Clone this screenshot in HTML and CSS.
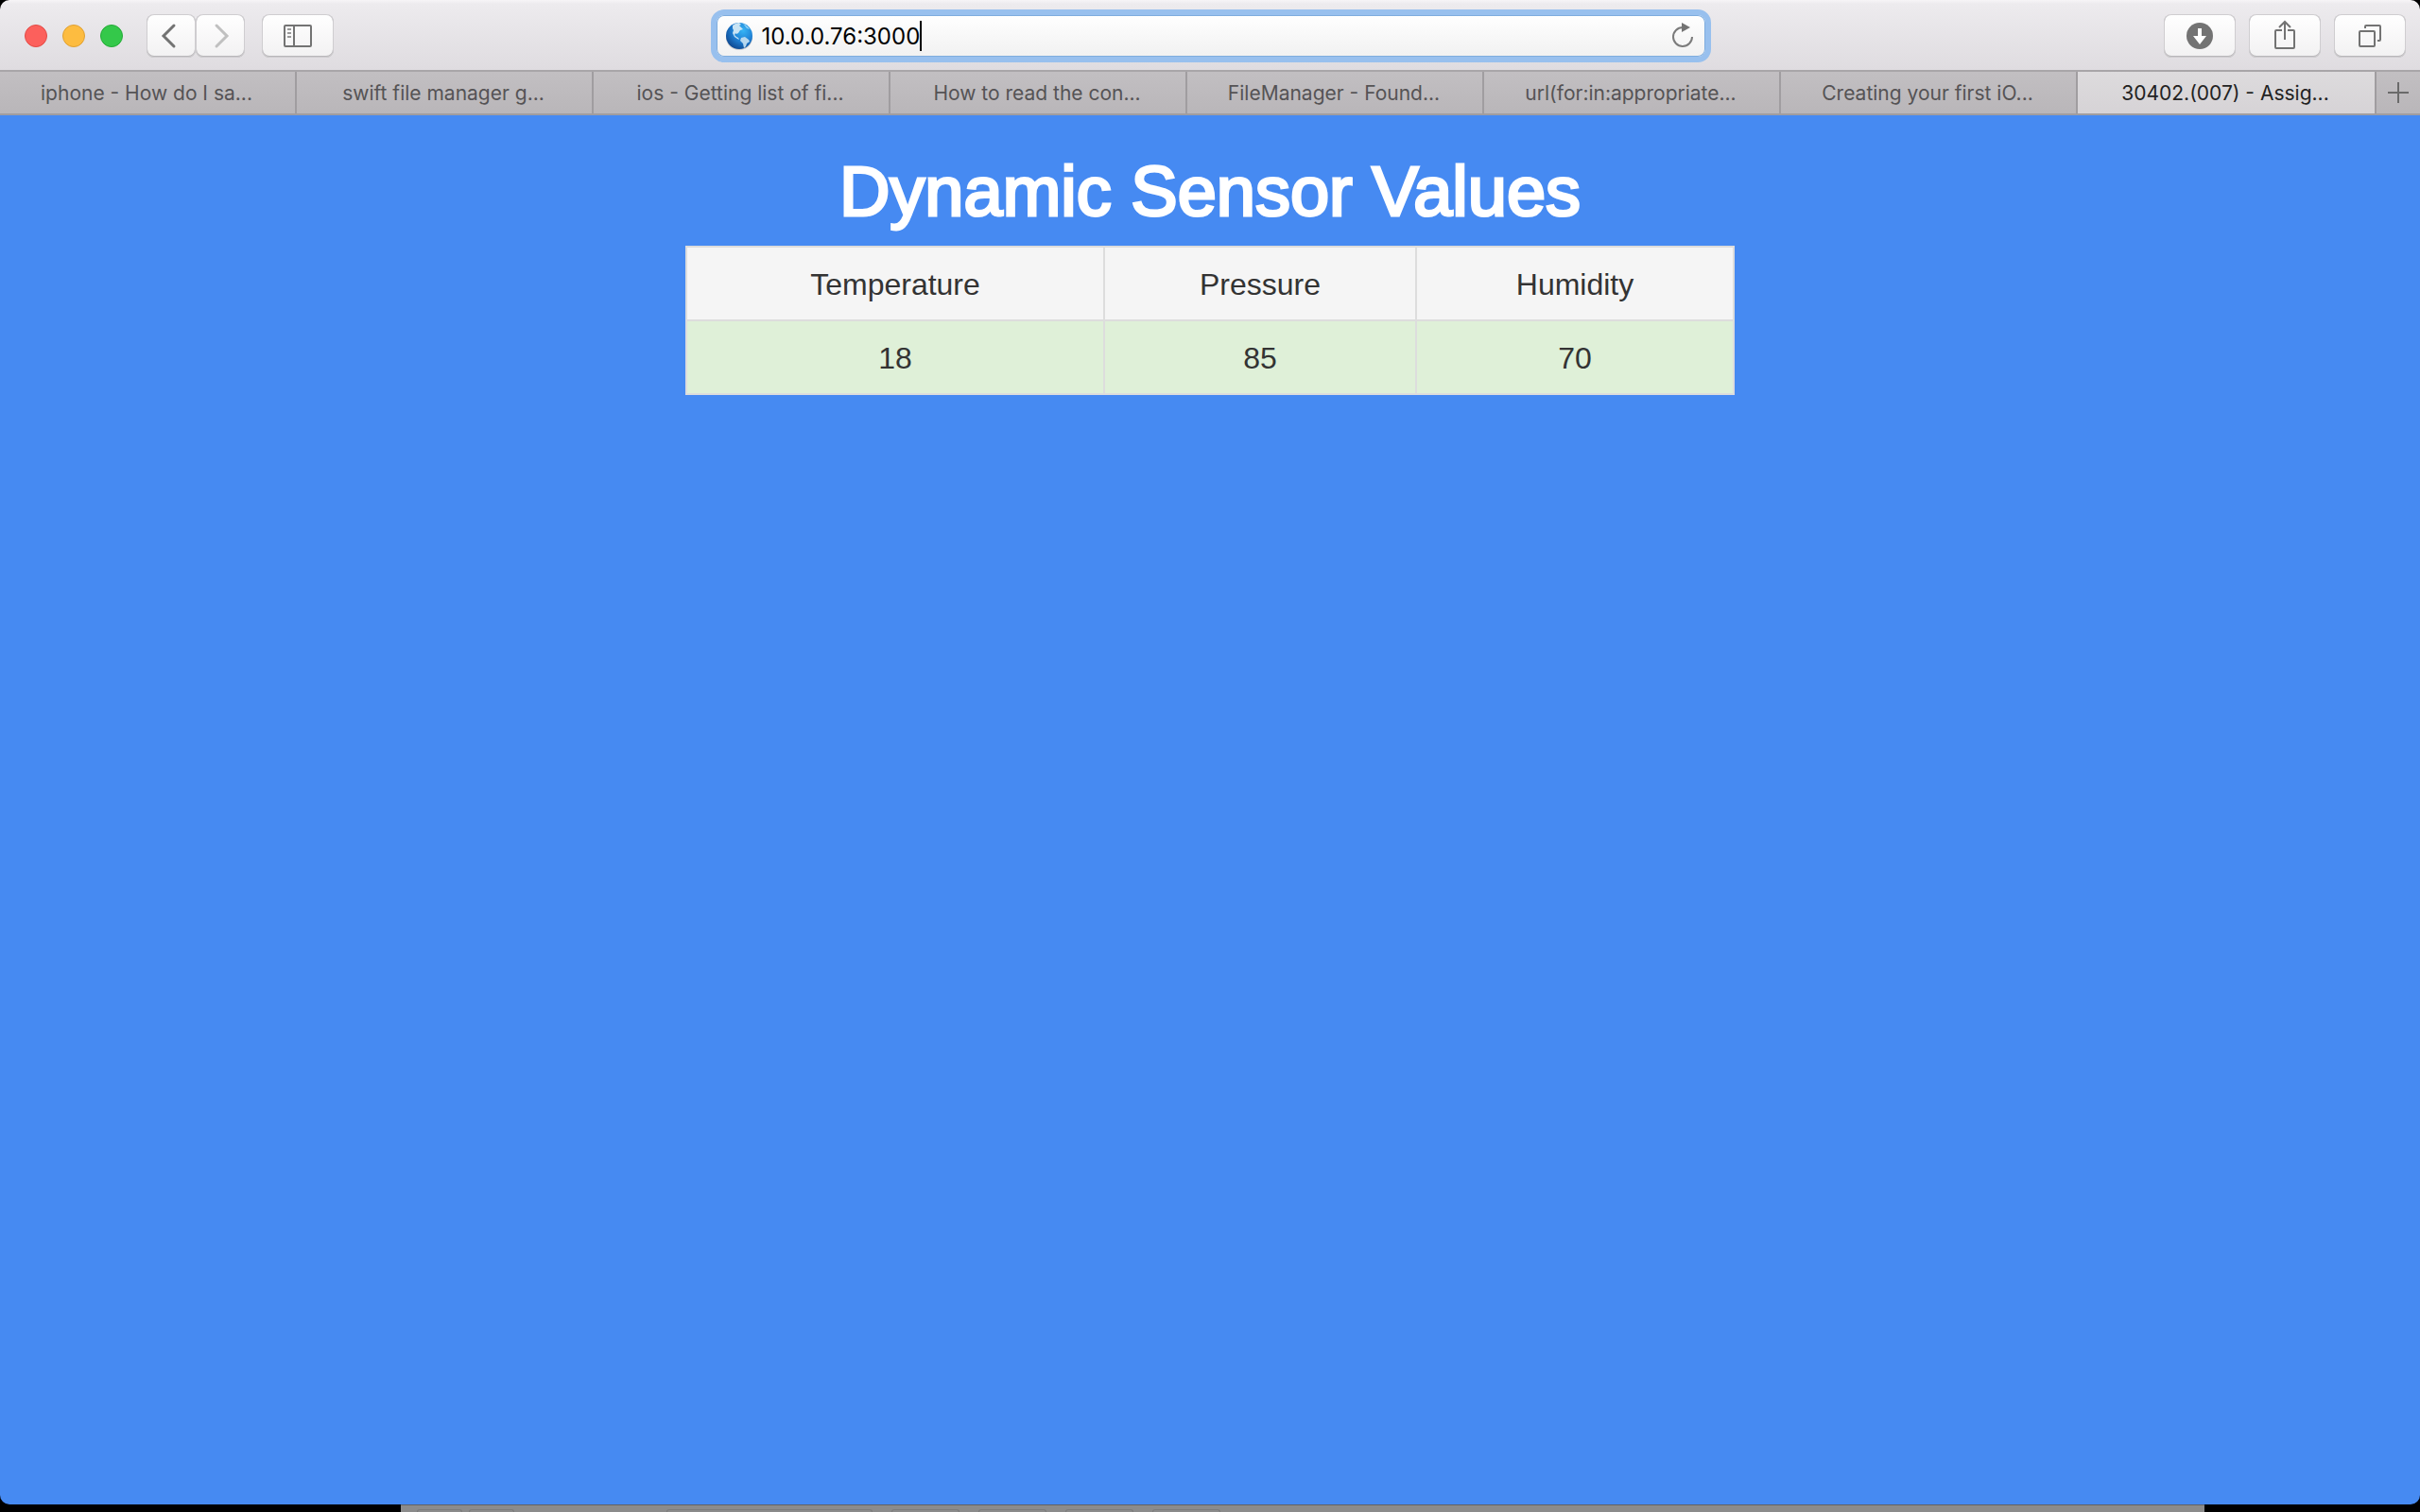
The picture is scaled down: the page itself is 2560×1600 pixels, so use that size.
FILE: index.html
```html
<!DOCTYPE html>
<html lang="en">
<head>
<meta charset="utf-8">
<title>Dynamic Sensor Values</title>
<link rel="stylesheet" href="styles.css">
</head>
<body>
<div class="window">
  <header class="toolbar">
    <div class="side">
      <div class="lights">
        <button class="light red" aria-label="Close"></button>
        <button class="light yellow" aria-label="Minimize"></button>
        <button class="light green" aria-label="Full screen"></button>
      </div>
      <div class="nav">
        <button class="tool narrow" aria-label="Back"><svg width="52" height="46" viewBox="0 0 52 46"><path d="M29 12 18 23l11 11" fill="none" stroke="#737373" stroke-width="3" stroke-linecap="round"/></svg></button>
        <button class="tool narrow" aria-label="Forward" disabled><svg width="52" height="46" viewBox="0 0 52 46"><path d="M22 12l11 11-11 11" fill="none" stroke="#c0c0c0" stroke-width="3" stroke-linecap="round"/></svg></button>
      </div>
      <button class="tool" aria-label="Sidebar"><svg width="76" height="46" viewBox="0 0 76 46" fill="none" stroke="#737373" stroke-width="2"><rect x="24" y="12" width="28" height="22" rx="1"/><path d="M34 12v22"/><path d="M27 16h4M27 20h4M27 24h4" stroke="#999"/></svg></button>
    </div>
    <div class="address">
      <svg class="globe" width="32" height="32" viewBox="0 0 32 32" aria-hidden="true">
        <defs><radialGradient id="sea" cx=".65" cy=".3" r=".8"><stop offset="0" stop-color="#36b4f5"/><stop offset=".5" stop-color="#1f80d4"/><stop offset="1" stop-color="#0c4188"/></radialGradient></defs>
        <ellipse cx="16" cy="18" rx="14" ry="13" fill="#000" opacity=".15"/>
        <circle cx="16" cy="16" r="14" fill="url(#sea)"/>
        <path d="M9 5c2-2 5-3 7-3l2 2-2 1 2 2 2 2-3 1-2 3-2 1-1-1-1 2 2 2 2 1 1 2-2-1-3-2-2-4 1-3-1-2z" fill="#c9e4f4"/>
        <path d="M18 18l4-1 4 3 1 2-3 2-1 3-2 2-1-5-3-3z" fill="#b7d8ef"/>
        <path d="M20 3c3 1 6 4 7 6l-3-1z" fill="#8bd0f6"/>
      </svg>
      <input class="url" type="text" value="10.0.0.76:3000" aria-label="Address">
      <span class="caret"></span>
      <button class="reload" aria-label="Reload"><svg width="26" height="32" viewBox="0 0 26 32"><path d="M23 17a10 10 0 1 1-10-10" fill="none" stroke="#7b7b7b" stroke-width="2"/><path d="M12 2l9 5-9 5z" fill="#737373"/></svg></button>
    </div>
    <div class="side end">
      <button class="tool" aria-label="Downloads"><svg width="76" height="46" viewBox="0 0 76 46"><circle cx="38" cy="23" r="14" fill="#737373"/><path d="M36 15h4v8h5l-7 9-7-9h5z" fill="#fff"/></svg></button>
      <button class="tool" aria-label="Share"><svg width="76" height="46" viewBox="0 0 76 46" fill="none" stroke="#737373" stroke-width="2"><path d="M35 17h-6a1 1 0 0 0-1 1v17a1 1 0 0 0 1 1h18a1 1 0 0 0 1-1V18a1 1 0 0 0-1-1h-6M38 27V8M32 14l6-6 6 6"/></svg></button>
      <button class="tool" aria-label="Show all tabs"><svg width="76" height="46" viewBox="0 0 76 46" fill="none" stroke="#737373" stroke-width="2"><rect x="27" y="18" width="16" height="16" rx="1"/><path d="M33 15v-2a1 1 0 0 1 1-1h14a1 1 0 0 1 1 1v14a1 1 0 0 1-1 1h-2"/></svg></button>
    </div>
  </header>
  <nav class="tabs">
    <button class="tab">iphone - How do I sa...</button>
    <button class="tab">swift file manager g...</button>
    <button class="tab">ios - Getting list of fi...</button>
    <button class="tab">How to read the con...</button>
    <button class="tab">FileManager - Found...</button>
    <button class="tab">url(for:in:appropriate...</button>
    <button class="tab">Creating your first iO...</button>
    <button class="tab active">30402.(007) - Assig...</button>
    <button class="add" aria-label="New tab"><svg width="22" height="22" viewBox="0 0 22 22"><path d="M11 0v22M0 11h22" stroke="#6a6a6a" stroke-width="2"/></svg></button>
  </nav>
  <main class="page">
    <h1>Dynamic Sensor Values</h1>
    <table>
      <thead><tr><th class="temperature" scope="col">Temperature</th><th class="pressure" scope="col">Pressure</th><th scope="col">Humidity</th></tr></thead>
      <tbody><tr><td>18</td><td>85</td><td>70</td></tr></tbody>
    </table>
  </main>
</div>
<div class="desktop" aria-hidden="true">
  <div class="behind">
    <i class="key k1"></i><i class="key k1"></i><i class="key k2"></i><i class="key"></i><i class="key"></i><i class="key"></i><i class="key"></i>
  </div>
</div>
</body>
</html>
```
FILE: styles.css
```css
* { box-sizing: border-box; }

body {
  margin: 0;
  min-height: 100vh;
  display: flex;
  flex-direction: column;
  background: #000;
  font-family: Inter, Roboto, "Liberation Sans", sans-serif;
}

button { margin: 0; padding: 0; border: 0; background: none; font: inherit; color: inherit; }
svg { display: block; }

.window {
  flex: 1;
  display: flex;
  flex-direction: column;
  border-radius: 10px;
  overflow: hidden;
}

/* toolbar */
.toolbar {
  height: 76px;
  display: grid;
  grid-template-columns: 1fr minmax(0, 1058px) 1fr;
  align-items: center;
  padding: 2px 15px 0 16px;
  column-gap: 12px;
  background: linear-gradient(#f7f5f7 0, #edebee 4px, #dfdce0 74px);
  border-bottom: 2px solid #a8a5a8;
}
.side { display: flex; align-items: center; gap: 18px; }
.side.end { justify-content: flex-end; gap: 14px; }
.lights { display: flex; gap: 16px; margin: 0 7px 0 10px; }
.light { width: 24px; height: 24px; border-radius: 50%; border: 1px solid; }
.red { background: #fc605c; border-color: #e24a45; }
.yellow { background: #fdbc40; border-color: #dfa032; }
.green { background: #34c84a; border-color: #24aa36; }
.nav { display: flex; }
.tool {
  width: 76px;
  height: 46px;
  border-radius: 8px;
  background: linear-gradient(#fff, #f2f1f2);
  box-shadow: inset 0 0 0 1px #cfcdd0, inset 0 -1px 0 1px #b9b7ba;
  overflow: hidden;
}
.tool.narrow { width: 52px; }

.address {
  height: 56px;
  display: flex;
  align-items: center;
  padding: 0 11px 0 8px;
  border: 6px solid #98c0ee;
  border-radius: 14px;
  background: linear-gradient(#fff, #f1f1f1);
  box-shadow: inset 0 0 0 1px #7fadde;
}
.globe { margin-right: 8px; }
.url {
  field-sizing: content;
  padding: 2px 0 0;
  border: 0;
  outline: 0;
  background: none;
  color: #000;
  font: 24px/32px Inter, Roboto, "Liberation Sans", sans-serif;
}
.caret { width: 2px; height: 32px; background: #000; }
.reload { margin-left: auto; }

/* tab bar */
.tabs {
  height: 46px;
  display: flex;
  background: linear-gradient(#c2bfc2, #b9b6b9);
  border-bottom: 2px solid #a09da0;
  font-size: 21px;
  color: #555355;
}
.tab {
  flex: 1 1 10%;
  min-width: 0;
  padding: 0 2px 0 0;
  border-right: 2px solid #a09da0;
  white-space: nowrap;
  overflow: hidden;
}
.tab.active { border-right: 0; background: linear-gradient(#dddbdd, #d6d3d6); color: #222; }
.add {
  flex: none;
  width: 48px;
  border-left: 2px solid #a09da0;
  display: flex;
  align-items: center;
  justify-content: center;
}

/* page */
.page {
  flex: 1;
  padding: 41px 24px;
  background: #468af2;
  font-family: "Liberation Sans", Arial, sans-serif;
  text-align: center;
}
h1 {
  margin: 0 0 17px;
  font-size: 74px;
  line-height: 80px;
  font-weight: 400;
  color: #fff;
  -webkit-text-stroke: 3px #fff;
}
table {
  width: 100%;
  max-width: 1110px;
  margin: 0 auto;
  border-collapse: collapse;
  table-layout: fixed;
  font-size: 32px;
  line-height: 44px;
  color: #333;
}
th, td { padding: 17px 16px 15px; border: 2px solid #ddd; font-weight: 400; }
th { background: #f5f5f5; }
td { background: #dff0d8; }
.temperature { width: 442px; }
.pressure { width: 330px; }

/* strip of desktop under the window */
.desktop { height: 8px; padding: 0 228px 0 424px; background: #000; }
.behind {
  height: 8px;
  display: flex;
  align-items: flex-end;
  gap: 20px;
  padding-left: 17px;
  background: #8b8b8b;
  border-top: 1px solid #626262;
}
.key { width: 72px; height: 3px; border: 1px solid #7b7b7b; border-bottom: 0; border-radius: 3px 3px 0 0; }
.k1 { width: 48px; margin-right: -13px; }
.k2 { width: 218px; margin-left: 154px; }
```
